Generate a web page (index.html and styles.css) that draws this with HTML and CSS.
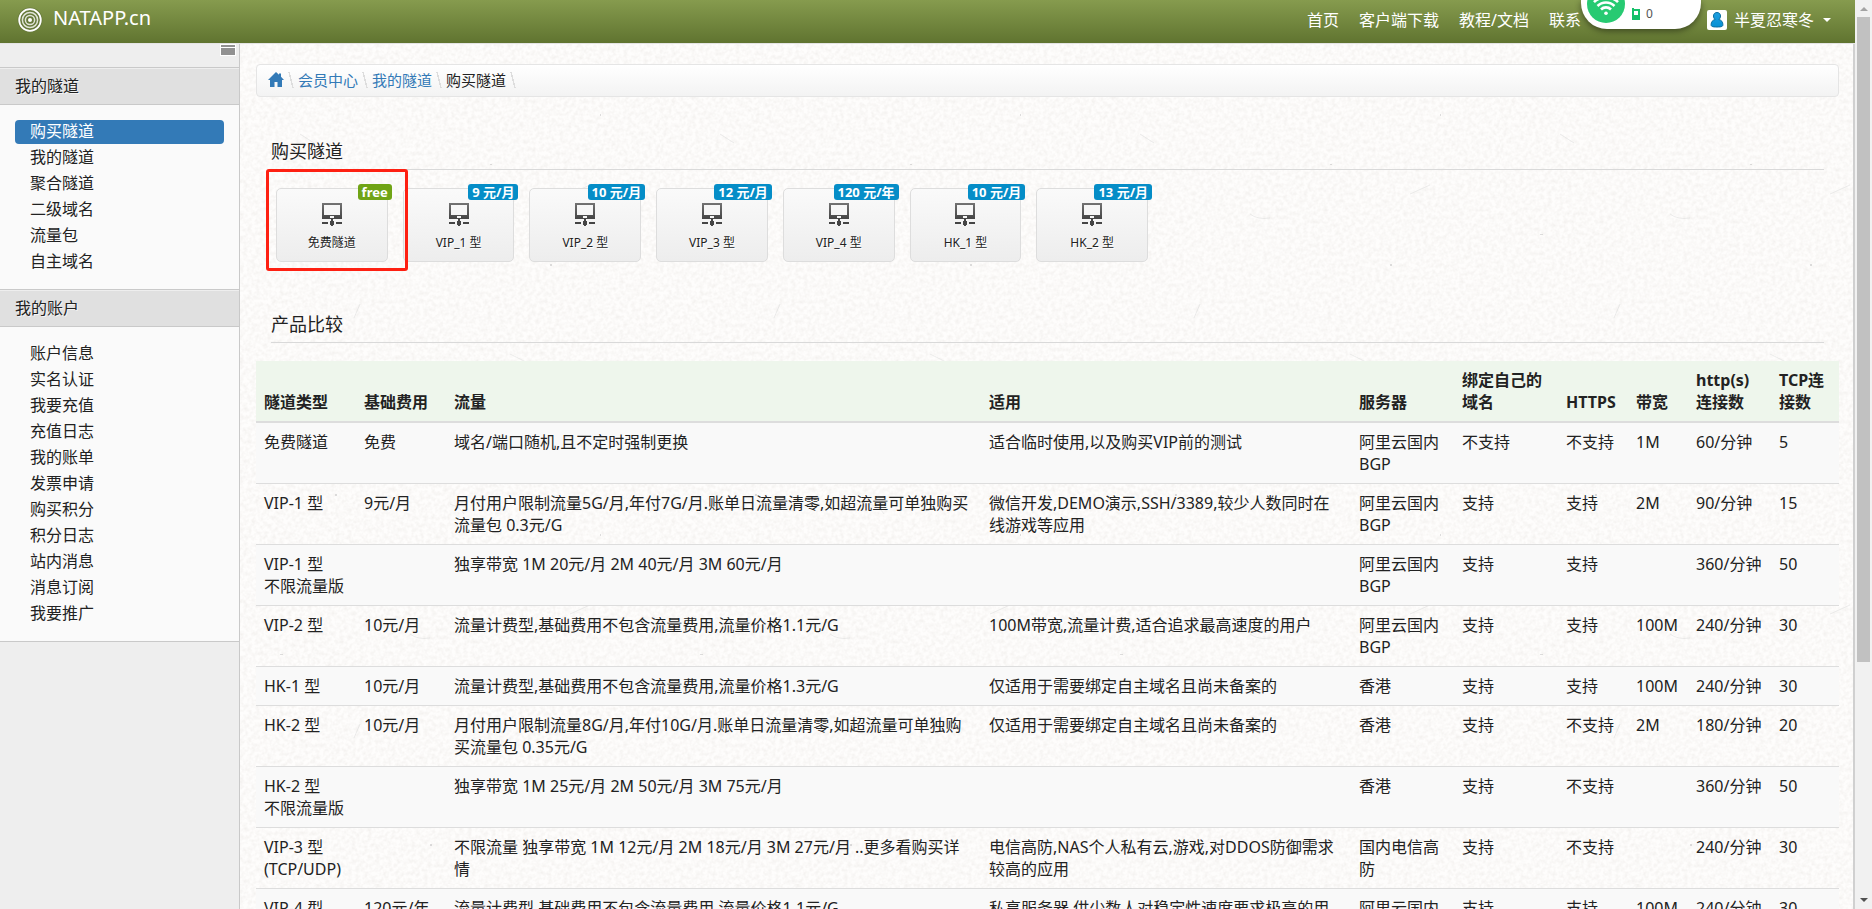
FILE: index.html
```html
<!DOCTYPE html>
<html lang="zh-CN">
<head>
<meta charset="utf-8">
<meta name="viewport" content="width=device-width, initial-scale=1">
<title>购买隧道 - NATAPP.cn</title>
<link rel="stylesheet" href="styles.css">
</head>
<body>
<svg class="defs" width="0" height="0" aria-hidden="true">
  <defs>
    <linearGradient id="steel" x1="0" y1="0" x2="0" y2="1"><stop offset="0" stop-color="#737373"/><stop offset="1" stop-color="#454545"/></linearGradient>
    <linearGradient id="azure" x1="0" y1="0" x2="0" y2="1"><stop offset="0" stop-color="#1f9fe0"/><stop offset="1" stop-color="#0590d4"/></linearGradient>
    <symbol id="tunnel" viewBox="0 0 20 23">
      <path fill="url(#steel)" fill-rule="evenodd" d="M0 0h20v16H0zM2 2v10h16V2zM8 13v2h4v-2z"/>
      <path fill="#454545" d="M9 16h2v2h1v4h-1v1H9v-1H8v-4h1zM0 19h6v2H0zM14 19h6v2h-6z"/>
    </symbol>
  </defs>
</svg>
<div class="window">
  <div class="page">
    <header class="topbar">
      <a class="brand" href="#">
        <svg width="26" height="26" viewBox="0 0 26 26" aria-hidden="true"><circle cx="13" cy="13" r="12.500" fill="#66793a"/><g fill="none" stroke="#fff"><circle cx="13" cy="13" r="10.800" stroke-width="1.800"/><circle cx="13" cy="13" r="7.600" stroke-width="1.500" opacity=".8"/><circle cx="13" cy="13" r="4.600" stroke-width="1.500" opacity=".8"/></g><circle cx="13" cy="13" r="2" fill="#fff"/></svg>
        <span>NATAPP.cn</span>
      </a>
      <nav class="nav">
        <a href="#">首页</a><a href="#">客户端下载</a><a href="#">教程/文档</a><a class="contact" href="#">联系</a>
        <button class="user" type="button">
          <svg width="20" height="20" viewBox="0 0 20 20" aria-hidden="true"><rect width="20" height="20" rx="2" fill="#fff"/><path d="M10 2.500c2.300 0 3.500 1.500 3.500 3.500 0 1.500-.7 2.700-1.600 3.500 2.600.6 4 2.500 4 5.200 0 1.600-1 2.300-5.900 2.300s-5.900-.7-5.900-2.300c0-2.700 1.400-4.600 4-5.200C7.200 8.700 6.500 7.500 6.500 6c0-2 1.200-3.500 3.500-3.500z" fill="url(#azure)" stroke="#086c9f"/></svg>
          <span>半夏忍寒冬</span>
          <i class="caret"></i>
        </button>
      </nav>
      <div class="wifi">
        <svg width="120" height="29" viewBox="0 0 120 29" aria-hidden="true"><circle cx="25" cy="4" r="19" fill="#27ca72"/><g fill="none" stroke="#fff" stroke-width="2.600"><path d="M20 9.500a7 7 0 0 1 10 0M16.500 6a12 12 0 0 1 17 0M13 2.200a17 17 0 0 1 24 0"/></g><circle cx="25" cy="13.300" r="1.800" fill="#fff"/><path fill="#16c06a" fill-rule="evenodd" d="M51 8h2v1h6v11h-8zM53 11v4h4v-4z"/></svg>
        <span>0</span>
      </div>
    </header>
    <div class="body">
      <aside class="sidebar">
        <div class="tools"><button class="collapse" type="button" aria-label="收起菜单"></button></div>
        <h2>我的隧道</h2>
        <ul>
          <li><a class="active" href="#">购买隧道</a></li><li><a href="#">我的隧道</a></li><li><a href="#">聚合隧道</a></li><li><a href="#">二级域名</a></li><li><a href="#">流量包</a></li><li><a href="#">自主域名</a></li>
        </ul>
        <h2>我的账户</h2>
        <ul>
          <li><a href="#">账户信息</a></li><li><a href="#">实名认证</a></li><li><a href="#">我要充值</a></li><li><a href="#">充值日志</a></li><li><a href="#">我的账单</a></li><li><a href="#">发票申请</a></li><li><a href="#">购买积分</a></li><li><a href="#">积分日志</a></li><li><a href="#">站内消息</a></li><li><a href="#">消息订阅</a></li><li><a href="#">我要推广</a></li>
        </ul>
      </aside>
      <main class="content">
        <nav class="crumbs">
          <a href="#" aria-label="首页"><svg width="16" height="15" viewBox="0 0 16 15" aria-hidden="true"><path fill="#337ab7" d="M8 0l3 2.800V1.500h2v3.200L16 8h-2v7H9.500v-5h-3v5H2V8H0z"/></svg></a>
          <i></i><a href="#">会员中心</a><i></i><a href="#">我的隧道</a><i></i><span>购买隧道</span><i></i>
        </nav>
        <h1>购买隧道</h1>
        <div class="plans">
          <a class="plan picked" href="#"><b class="free">free</b><svg width="20" height="23"><use href="#tunnel"/></svg><span>免费隧道</span></a>
          <a class="plan" href="#"><b>9 元/月</b><svg width="20" height="23"><use href="#tunnel"/></svg><span>VIP_1 型</span></a>
          <a class="plan" href="#"><b>10 元/月</b><svg width="20" height="23"><use href="#tunnel"/></svg><span>VIP_2 型</span></a>
          <a class="plan" href="#"><b>12 元/月</b><svg width="20" height="23"><use href="#tunnel"/></svg><span>VIP_3 型</span></a>
          <a class="plan" href="#"><b>120 元/年</b><svg width="20" height="23"><use href="#tunnel"/></svg><span>VIP_4 型</span></a>
          <a class="plan" href="#"><b>10 元/月</b><svg width="20" height="23"><use href="#tunnel"/></svg><span>HK_1 型</span></a>
          <a class="plan" href="#"><b>13 元/月</b><svg width="20" height="23"><use href="#tunnel"/></svg><span>HK_2 型</span></a>
        </div>
        <h1>产品比较</h1>
        <table>
          <colgroup><col class="c1"><col class="c2"><col class="c3"><col class="c4"><col class="c5"><col class="c6"><col class="c7"><col class="c8"><col class="c9"><col class="c10"></colgroup>
          <thead><tr><th>隧道类型</th><th>基础费用</th><th>流量</th><th>适用</th><th>服务器</th><th>绑定自己的域名</th><th>HTTPS</th><th>带宽</th><th>http(s)<br>连接数</th><th>TCP连接数</th></tr></thead>
          <tbody>
            <tr><td>免费隧道</td><td>免费</td><td>域名/端口随机,且不定时强制更换</td><td>适合临时使用,以及购买VIP前的测试</td><td>阿里云国内BGP</td><td>不支持</td><td>不支持</td><td>1M</td><td>60/分钟</td><td>5</td></tr>
            <tr><td>VIP-1 型</td><td>9元/月</td><td>月付用户限制流量5G/月,年付7G/月.账单日流量清零,如超流量可单独购买流量包 0.3元/G</td><td>微信开发,DEMO演示,SSH/3389,较少人数同时在线游戏等应用</td><td>阿里云国内BGP</td><td>支持</td><td>支持</td><td>2M</td><td>90/分钟</td><td>15</td></tr>
            <tr><td>VIP-1 型<br>不限流量版</td><td></td><td>独享带宽 1M 20元/月 2M 40元/月 3M 60元/月</td><td></td><td>阿里云国内BGP</td><td>支持</td><td>支持</td><td></td><td>360/分钟</td><td>50</td></tr>
            <tr><td>VIP-2 型</td><td>10元/月</td><td>流量计费型,基础费用不包含流量费用,流量价格1.1元/G</td><td>100M带宽,流量计费,适合追求最高速度的用户</td><td>阿里云国内BGP</td><td>支持</td><td>支持</td><td>100M</td><td>240/分钟</td><td>30</td></tr>
            <tr><td>HK-1 型</td><td>10元/月</td><td>流量计费型,基础费用不包含流量费用,流量价格1.3元/G</td><td>仅适用于需要绑定自主域名且尚未备案的</td><td>香港</td><td>支持</td><td>支持</td><td>100M</td><td>240/分钟</td><td>30</td></tr>
            <tr><td>HK-2 型</td><td>10元/月</td><td>月付用户限制流量8G/月,年付10G/月.账单日流量清零,如超流量可单独购买流量包 0.35元/G</td><td>仅适用于需要绑定自主域名且尚未备案的</td><td>香港</td><td>支持</td><td>不支持</td><td>2M</td><td>180/分钟</td><td>20</td></tr>
            <tr><td>HK-2 型<br>不限流量版</td><td></td><td>独享带宽 1M 25元/月 2M 50元/月 3M 75元/月</td><td></td><td>香港</td><td>支持</td><td>不支持</td><td></td><td>360/分钟</td><td>50</td></tr>
            <tr><td>VIP-3 型<br>(TCP/UDP)</td><td></td><td>不限流量 独享带宽 1M 12元/月 2M 18元/月 3M 27元/月 ..更多看购买详情</td><td>电信高防,NAS个人私有云,游戏,对DDOS防御需求较高的应用</td><td>国内电信高防</td><td>支持</td><td>不支持</td><td></td><td>240/分钟</td><td>30</td></tr>
            <tr><td>VIP-4 型</td><td>120元/年</td><td>流量计费型,基础费用不包含流量费用,流量价格1.1元/G</td><td>私享服务器,供少数人对稳定性速度要求极高的用户</td><td>阿里云国内BGP</td><td>支持</td><td>支持</td><td>100M</td><td>240/分钟</td><td>30</td></tr>
          </tbody>
        </table>
      </main>
    </div>
  </div>
  <div class="scroll" aria-hidden="true"><i class="up"></i><i class="thumb"></i><i class="down"></i></div>
</div>
</body>
</html>
```
FILE: styles.css
```css
* { box-sizing: border-box; }
body {
  margin: 0;
  background: #eee;
  color: #222;
  font: 16px/22px "Noto Sans", "Noto Sans CJK SC", sans-serif;
}
a { color: inherit; text-decoration: none; }
button { border: 0; padding: 0; background: none; color: inherit; font: inherit; cursor: pointer; }
svg { display: block; }
.defs { position: absolute; }

.window { display: flex; height: 100vh; overflow: hidden; }
.page { flex: 1; min-width: 0; display: flex; flex-direction: column; }

.topbar {
  position: relative;
  flex: none;
  display: flex;
  justify-content: space-between;
  height: 43px;
  padding: 0 24px 8px 17px;
  background: linear-gradient(#869b4e, #607430);
  color: #fff;
}
.brand { display: flex; align-items: center; gap: 10px; font-size: 20px; }
.brand svg { margin-top: 4px; }
.nav { display: flex; align-items: center; gap: 20px; padding-top: 5px; }
.contact { margin-right: 106px; }
.user { display: flex; align-items: center; gap: 7px; }
.caret { border: 4px solid transparent; border-top-color: #fff; border-bottom: 0; margin-left: 2px; }

/* floating network monitor */
.wifi {
  position: absolute;
  top: 0;
  right: 154px;
  width: 120px;
  height: 29px;
  border-radius: 0 0 26px 26px;
  background: #fff;
  box-shadow: 0 2px 6px rgba(0, 0, 0, .45);
}
.wifi span { position: absolute; left: 65px; top: 6px; color: #555; font-size: 12px; line-height: 16px; }

.body { flex: 1; min-height: 0; display: flex; border-top: 1px solid #e4e4e4; }

.sidebar { width: 240px; flex: none; background: #eee; border-right: 1px solid #c9c9c9; }
.tools { display: flex; justify-content: flex-end; height: 23px; padding: 0 3px; }
.collapse {
  width: 16px;
  height: 12px;
  border: 1px solid #fff;
  background: linear-gradient(#919191 2px, #fff 2px, #fff 3px, #919191 3px) padding-box;
}
.sidebar h2 {
  margin: 0;
  padding: 7px 15px;
  border: solid #c9c9c9;
  border-width: 1px 0;
  background: #e0e0e0;
  box-shadow: inset 0 1px #eee;
  font-size: 16px;
  font-weight: 400;
  text-shadow: 1px 1px #f4f4f4;
}
.sidebar ul {
  margin: 0;
  padding: 15px 15px 13px;
  background: #fafafa;
  list-style: none;
}
.sidebar ul:last-child { border-bottom: 1px solid #c9c9c9; }
.sidebar li { padding-bottom: 2px; }
.sidebar li a { display: block; padding: 0 15px 2px; border-radius: 4px; }
.sidebar .active { background: #337ab7; color: #fff; }

.content {
  flex: 1;
  min-width: 0;
  overflow: hidden;
  padding: 20px 14px 0 16px;
  border-right: 2px solid #d0d0d0;
  background: #fefdfc url("data:image/svg+xml,%3Csvg xmlns='http://www.w3.org/2000/svg' width='420' height='420'%3E%3Cfilter id='n' color-interpolation-filters='sRGB'%3E%3CfeTurbulence type='fractalNoise' baseFrequency='.25' numOctaves='3' stitchTiles='stitch'/%3E%3CfeColorMatrix values='0 0 0 0 .62 0 0 0 0 .58 0 0 0 0 .54 .2 0 0 0 -.07'/%3E%3C/filter%3E%3Crect width='420' height='420' filter='url(%23n)'/%3E%3Cg fill='none' stroke='%23ccc' stroke-opacity='.35'%3E%3Cpath d='M60 90l14 9M210 40q10 3 14 10M330 150l20-9M120 260l-6 14M270 310l16 8M380 360q-8 4-18 3M30 350l12-8M170 170q8 6 20 4'/%3E%3C/g%3E%3Cg fill='%23bbb' fill-opacity='.5'%3E%3Cpath d='M95 30h2v2h-2zM250 120h2v1h-2zM310 220h2v2h-2zM40 190h3v1h-3zM190 380h2v2h-2zM360 70h1v2h-1zM140 330h2v1h-2z'/%3E%3C/g%3E%3C/svg%3E");
}

.crumbs {
  display: flex;
  align-items: center;
  height: 33px;
  padding: 0 11px 2px;
  border: 1px solid #e5e5e5;
  border-radius: 4px;
  background: linear-gradient(#fff, #f3f3f3);
  font-size: 15px;
}
.crumbs a { color: #337ab7; }
.crumbs i { width: 14px; height: 16px; background: linear-gradient(75deg, transparent 46%, #ddd 46%, #ddd 54%, transparent 54%); }

h1 {
  margin: 41px 15px 0;
  padding-bottom: 4px;
  border-bottom: 1px solid #d9d9d9;
  font-size: 18px;
  font-weight: 400;
  line-height: 27px;
}
.plans { display: flex; gap: 15px; max-width: 872px; margin: 18px 20px 0; }
.plan {
  position: relative;
  flex: 1;
  display: flex;
  flex-direction: column;
  align-items: center;
  gap: 8px;
  padding: 14px 0 9px;
  border: 1px solid #ddd;
  border-radius: 5px;
  background: linear-gradient(#fafafa, #ededed);
  font-size: 12px;
  line-height: 18px;
  text-shadow: 1px 1px #fff;
}
.plan b {
  position: absolute;
  top: -5px;
  right: -5px;
  padding: 0 4px;
  border-radius: 3px;
  background: #058dc7;
  color: #fff;
  font-size: 13px;
  line-height: 16px;
  text-shadow: none;
  white-space: nowrap;
}
.plan .free { background: #70a415; }
/* highlight frame round the selected plan */
.picked::after {
  content: "";
  position: absolute;
  z-index: 1;
  top: -20px;
  right: -21px;
  bottom: -10px;
  left: -11px;
  border: 3px solid #fe2012;
  border-radius: 3px;
}
.plans + h1 { margin-top: 49px; }

table { width: 100%; margin-top: 18px; border-collapse: collapse; table-layout: fixed; }
.c1 { width: 100px; } .c2 { width: 90px; } .c4 { width: 370px; } .c5 { width: 103px; }
.c6 { width: 104px; } .c7 { width: 70px; } .c8 { width: 60px; } .c9 { width: 83px; } .c10 { width: 68px; }
th, td { padding: 8px; text-align: left; vertical-align: top; border-top: 1px solid #ddd; }
th { vertical-align: bottom; background: #eef6ec; border-top: 0; border-bottom: 2px solid #ddd; }
tbody tr:nth-child(odd) { background: #f9f9f9; }

.scroll { width: 17px; flex: none; display: flex; flex-direction: column; align-items: center; background: #f1f1f1; }
.scroll .up, .scroll .down { border: 4px solid transparent; }
.scroll .up { margin: 3px 0 6px; border-bottom-color: #a3a3a3; }
.scroll .thumb { width: 13px; flex: 0 1 71%; background: #c1c1c1; }
.scroll .down { margin: auto 0 3px; border-top-color: #505050; }
```
